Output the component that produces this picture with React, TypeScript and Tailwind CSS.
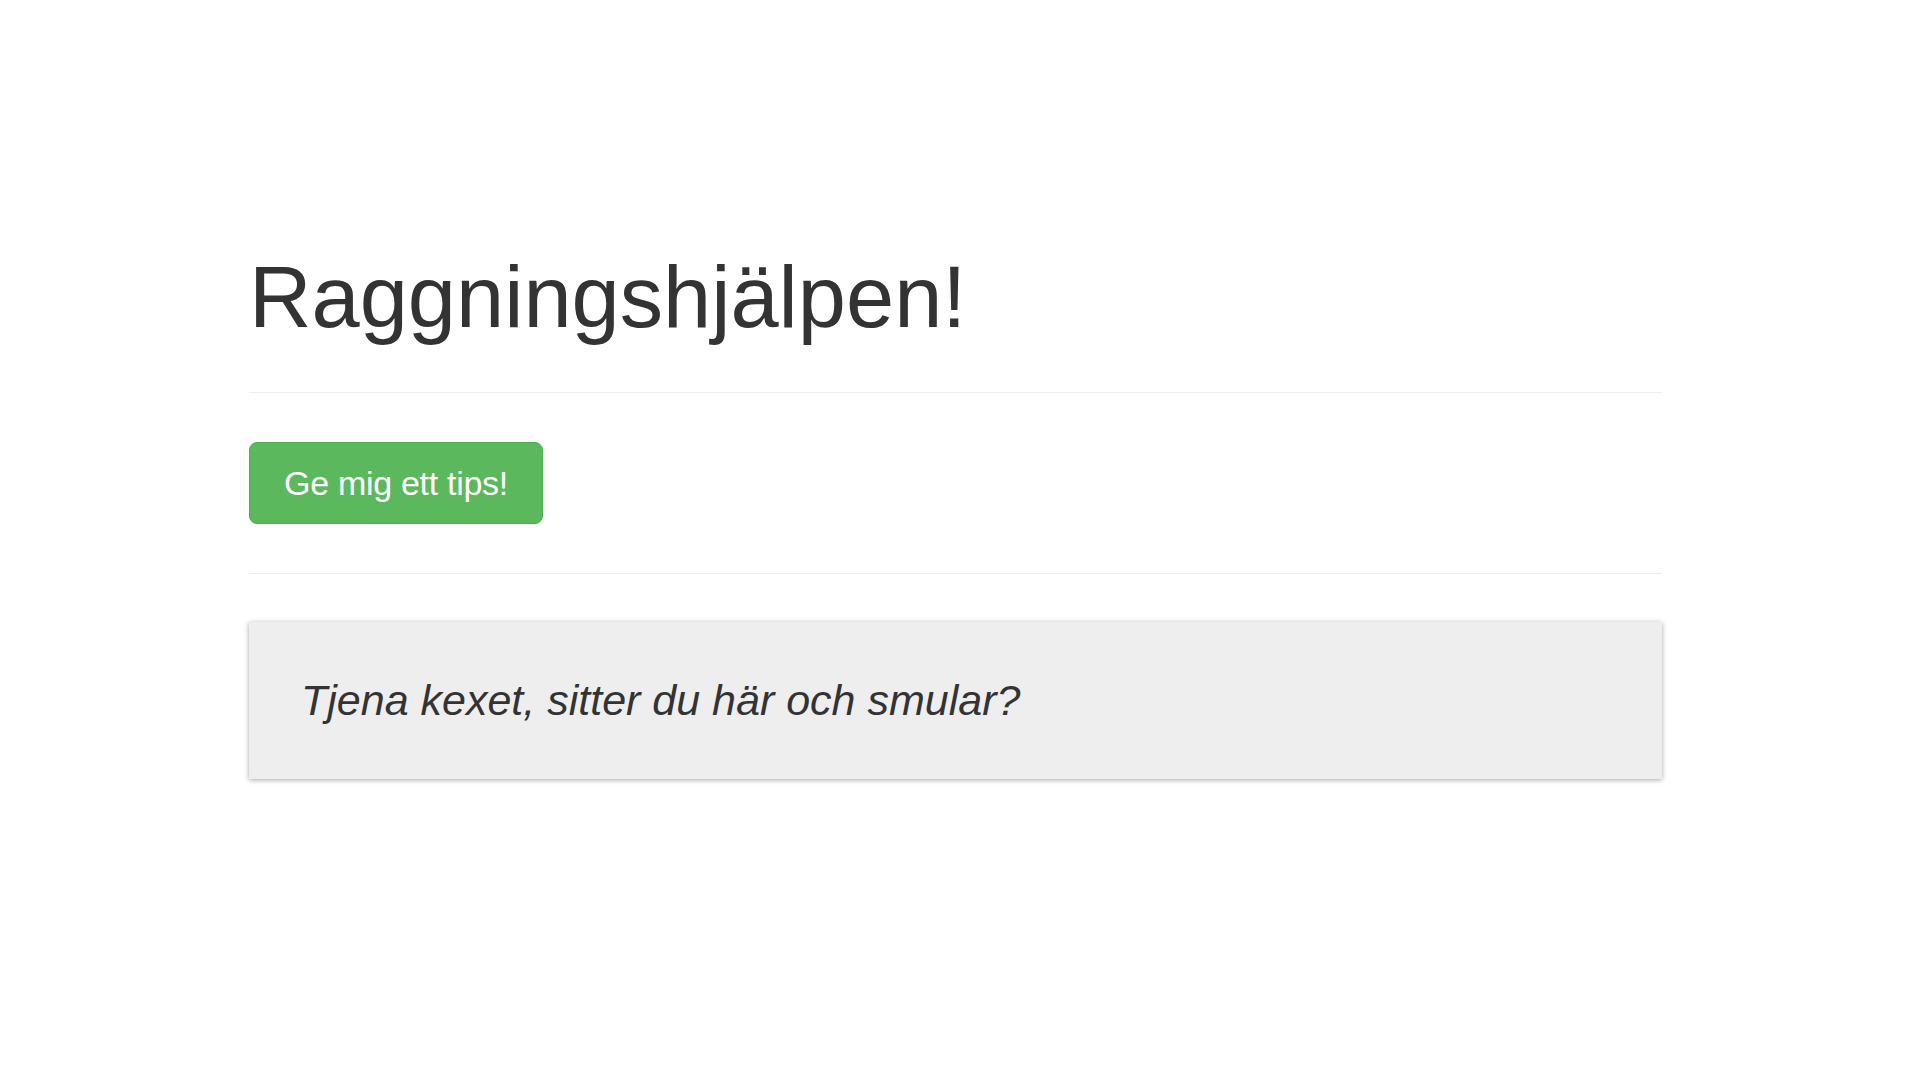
export default function App() {
  return (
    <div className="min-h-screen bg-white font-['Liberation_Sans',Arial,sans-serif] text-[#333333]">
      <div className="ml-[249px] w-[1413px] pt-[254px]">
        {/* Header */}
        <h1 className="text-[86.6px] leading-[86px] font-normal">Raggningshjälpen!</h1>
        <hr className="mt-[52px] border-0 border-t border-[#eeeeee]" />

        {/* Action */}
        <div className="py-[49px]">
          <button className="flex items-center justify-center w-[294px] h-[82px] rounded-[8px] bg-[#5cb85c] border border-[#4cae4c] text-white text-[34px] tracking-[-0.3px]">
            Ge mig ett tips!
          </button>
        </div>
        <hr className="border-0 border-t border-[#eeeeee]" />

        {/* Tip */}
        <div className="mt-[48px] h-[157px] flex items-center pl-[52px] bg-[#eeeeee] shadow-[0_1px_5px_rgba(0,0,0,0.35)]">
          <p className="italic text-[43px] leading-none">Tjena kexet, sitter du här och smular?</p>
        </div>
      </div>
    </div>
  );
}
